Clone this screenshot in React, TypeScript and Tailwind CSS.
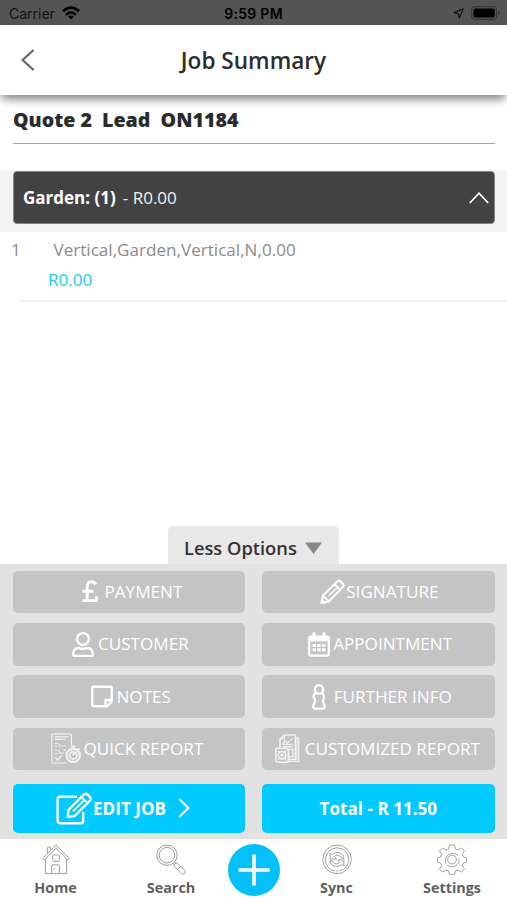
import type { ReactNode } from 'react';
import { FaRegStickyNote, FaRegUser } from 'react-icons/fa';
import clsx from 'clsx';

function PoundIcon({ className }: { className?: string }) {
  return (
    <svg viewBox="0 0 16 23" className={className} fill="none" stroke="currentColor" strokeWidth="2.9">
      <path d="M13.8 4.4Q12.4 1.8 9.6 1.8 5.2 1.8 5.2 6.6V20.4M.4 11.2H11.6M.4 20.6H14.4V16.2" />
    </svg>
  );
}

function PencilIcon({ className }: { className?: string }) {
  return (
    <svg viewBox="0 0 25 26" className={className} fill="none" stroke="currentColor" strokeWidth="2.1" strokeLinejoin="round">
      <path d="M1.5 24.2 3 16.6 17.3 2.4Q19 1 20.6 2.4L23 4.8Q24.2 6.3 22.8 8L8.8 22.4Z" />
      <path d="M14.6 5.4 20 10.8M3 16.6 8.8 22.4" strokeWidth="1.9" />
      <path d="M8.6 17 16.6 9" strokeWidth="1.3" />
      <path d="M1.5 24.2 2.4 20.2 5.4 23.2Z" fill="currentColor" strokeWidth="1" />
    </svg>
  );
}

function CalendarIcon({ className }: { className?: string }) {
  return (
    <svg viewBox="0 0 22 25" className={className} fill="none" stroke="currentColor">
      <path d="M6 1.6V5M16 1.6V5" strokeWidth="3" strokeLinecap="round" />
      <rect x="1.2" y="4.6" width="19.6" height="19" rx="1.6" strokeWidth="2.2" />
      <path d="M1.2 4.6h19.6v4.8H1.2z" fill="currentColor" stroke="none" />
      <path d="M4.6 13.4h12.8M4.6 17.8h12.8" strokeWidth="3" strokeDasharray="3.4 1.3" />
    </svg>
  );
}

function InfoIcon({ className }: { className?: string }) {
  return (
    <svg viewBox="0 0 14 26" className={className} fill="none" stroke="currentColor" strokeWidth="2.2" strokeLinejoin="round">
      <circle cx="7" cy="5.4" r="4.2" />
      <path d="M4 9.4Q1.4 10.4 1.4 12.4 1.4 13.8 2.8 14.6 3.6 16.8 2.6 18.8 1.2 20.4 1.2 22.6 1.2 24.6 3 24.6H11Q12.8 24.6 12.8 22.6 12.8 20.6 11.4 18.8 10.6 16.8 11.6 14.4 12.6 10.8 10 9.4" />
    </svg>
  );
}

function QuickReportIcon({ className }: { className?: string }) {
  return (
    <svg viewBox="0 0 30 31" className={className} fill="none" stroke="currentColor" strokeWidth="1.2" opacity="0.75">
      <path d="M16 30H2Q.8 30 .8 28.8V2Q.8.8 2 .8H19Q20.4.8 20.4 2V13" />
      <path d="M3.6 3.8H17.2M4 6.4H14.6M8.2 10.4V13H15M4 10.4h2.4M4 13h2.4M8.2 17v3h5M4 17.5h2.4M4 20.5h2.4M12 17h3" />
      <path d="M4.2 24.4 6.6 27 10.6 22.4" strokeWidth="1.5" />
      <circle cx="22.2" cy="22.4" r="6.6" strokeWidth="2.4" />
      <circle cx="22.2" cy="22.4" r="3.6" strokeWidth="1.8" />
      <path d="M20 13.4h4.4M22.2 13.4v2.4M27 15.4l1.6 1.6M22.2 22.4l1-2.6" strokeWidth="1.9" />
    </svg>
  );
}

function CustomizedReportIcon({ className }: { className?: string }) {
  return (
    <svg viewBox="0 0 25 29" className={className} fill="none" stroke="currentColor" strokeWidth="1.2" opacity="0.8">
      <path d="M5 13V5L9.4 1H19.4Q20.4 1 20.4 2V25.4H13.6" strokeWidth="1.5" />
      <path d="M21.8 3.4Q23.8 3.4 23.8 5V27.4H14" />
      <path d="M20.8 3.4h2.2v23h-2.2z" fill="currentColor" fillOpacity="0.5" stroke="none" />
      <path d="M9.4 1V5H5M7.4 10.4 10 6.6 12.4 9 17.4 4.4M7.4 10.4H17.4M7.6 12.6h10M13.4 15.4h4.4V22.6h-4.4" />
      <rect x=".8" y="14.2" width="12.6" height="14" rx="1.6" strokeWidth="1.6" />
      <circle cx="7" cy="21.2" r="3.7" strokeWidth="1.6" />
      <circle cx="7" cy="21.2" r="1.1" />
      <path d="M3 16.6 4.6 18.6M11.2 16.6 9.6 18.6M3 25.8 4.6 24M11.2 25.8 9.6 24" />
    </svg>
  );
}

function EditIcon({ className }: { className?: string }) {
  return (
    <svg viewBox="0 0 37 33" className={className} fill="none" stroke="currentColor" strokeWidth="2.4" strokeLinejoin="round">
      <path d="M21 4.8H4.2Q1.6 4.8 1.6 7.2V28.6Q1.6 31.2 4.2 31.2H24.8Q27.2 31.2 27.2 28.8V20" />
      <path d="M11.8 24.8 12.6 17.8 27.8 2.6Q29.8.8 31.6 2.6L34.2 5.2Q35.6 6.8 34 8.6L18.6 24Z" strokeWidth="2.3" />
      <path d="M25.4 5 31.6 11.2M17 19.4 27.6 8.8" strokeWidth="1.8" />
    </svg>
  );
}

function HomeIcon() {
  return (
    <svg viewBox="0 0 28 31" className="h-[31px] w-7" fill="none" stroke="currentColor" strokeWidth="1">
      <path d="M14 1 .7 14.2 2.2 16 14 4.4 25.8 16 27.3 14.2Z" />
      <path d="M3.4 15V29.6H24.6V15M5.4 10V3.2H8.4V7" />
      <rect x="10.8" y="11" width="6.6" height="6.4" rx="1" />
      <path d="M9.6 29.6V22Q9.6 20.8 10.8 20.8H16.2Q17.4 20.8 17.4 22V29.6M11.4 25h2" />
    </svg>
  );
}

function SearchIcon() {
  return (
    <svg viewBox="0 0 30 31" className="h-[31px] w-[30px]" fill="none" stroke="currentColor" strokeWidth="1">
      <circle cx="11" cy="11.2" r="10.2" />
      <circle cx="11" cy="11.2" r="7.8" />
      <path d="M17 19.4 19 21.4M19 17.8 21 19.8" />
      <path d="M18.4 22.6Q17.4 21 18.6 19.8 20.2 18.6 21.8 19.8L28.6 26Q30 27.8 28.6 29.4 26.8 30.8 25.2 29.4ZM21.6 25.4 25 22.4" />
    </svg>
  );
}

function SyncIcon() {
  return (
    <svg viewBox="0 0 30 31" className="h-[31px] w-[30px]" fill="none" stroke="currentColor" strokeWidth="1">
      <circle cx="15" cy="15.4" r="14.3" />
      <path d="M12.6 27Q3.4 24.6 3.4 15.4A11.6 11.6 0 0 1 26.6 15.4Q26.6 24.6 17.4 27M15 26v2.4" />
      <path d="M8.2 15V9L10.4 10.6Q15.4 6.4 20.4 10.4 22 12 22 14.4H19.6Q19 11.6 16 11 13.6 11 12.4 12.6L14.6 15Z" />
      <path d="M21.8 16V22L19.6 20.4Q14.6 24.6 9.6 20.6 8 19 8 16.6H10.4Q11 19.4 14 20 16.4 20 17.6 18.4L15.4 16Z" />
    </svg>
  );
}

function SettingsIcon() {
  return (
    <svg viewBox="0 0 30 31" className="h-[31px] w-[30px]" fill="none" stroke="currentColor" strokeWidth="1" strokeLinejoin="round">
      <path d="M12.4 1h5.2l.7 4 2.7 1.2 3.4-2.4 3.1 3.1-2.3 3.4 1.1 2.7 3.3.8v4.4l-3.3.8-1.1 2.7 2.3 3.4-3.1 3.1-3.4-2.4-2.7 1.2-.7 3.3h-5.2l-.7-3.3L9 25.8l-3.4 2.4-3.1-3.1 2.3-3.4L3.7 19l-3.3-.8v-4.4l3.3-.8 1.1-2.7-2.3-3.4 3.1-3.1L9 6.2 11.7 5Z" />
      <path d="M8.9 19.5A7.3 7.3 0 0 1 21.1 11.8M22 14.4A7.3 7.3 0 0 1 10.4 21.4" />
      <circle cx="15" cy="15.5" r="4.4" />
    </svg>
  );
}

type Option = { label: string; icon: ReactNode; pad: string; text: string };

const options: Option[] = [
  { label: 'PAYMENT', icon: <PoundIcon className="h-[23px] w-4" />, pad: 'pl-[69px]', text: 'ml-[6.5px]' },
  { label: 'SIGNATURE', icon: <PencilIcon className="h-[26px] w-[25px]" />, pad: 'pl-[57.5px]', text: 'ml-[1.5px]' },
  { label: 'CUSTOMER', icon: <FaRegUser className="h-[25px] w-[22px]" />, pad: 'pl-[59px]', text: 'ml-[4px]' },
  { label: 'APPOINTMENT', icon: <CalendarIcon className="h-[25px] w-[22px]" />, pad: 'pl-[45.5px]', text: 'ml-[3.5px]' },
  { label: 'NOTES', icon: <FaRegStickyNote className="h-[25px] w-[22px]" />, pad: 'pl-[77.5px]', text: 'ml-[4px]' },
  { label: 'FURTHER INFO', icon: <InfoIcon className="h-[26px] w-[14px]" />, pad: 'pl-[50px]', text: 'ml-[7.5px]' },
  { label: 'QUICK REPORT', icon: <QuickReportIcon className="h-[31px] w-[30px]" />, pad: 'pl-[38px]', text: 'ml-[2.5px]' },
  { label: 'CUSTOMIZED REPORT', icon: <CustomizedReportIcon className="h-[29px] w-[25px]" />, pad: 'pl-[13px]', text: 'ml-[4.5px]' },
];

function NavItem({ label, className, children }: { label: string; className: string; children: ReactNode }) {
  return (
    <button className={clsx('flex flex-col items-center pt-[4px] text-[#a0a0a0]', className)}>
      {children}
      <span className="mt-[3px] text-[14.4px] leading-5 font-bold text-[#5f5f5f]">{label}</span>
    </button>
  );
}

export default function App() {
  return (
    <div className="flex h-[900px] w-[507px] flex-col overflow-hidden bg-white font-['Open_Sans',sans-serif]">
      <div className="grid h-[25px] shrink-0 grid-cols-3 items-center bg-[#545454] pt-px font-['Inter',sans-serif] text-[14px] text-[#111]">
        <div className="flex items-center gap-[7px] pl-[9px]">
          <span>Carrier</span>
          <svg viewBox="0 0 18 14" className="-mt-px h-[14px] w-[18px]" fill="none" stroke="#000" strokeWidth="2.6">
            <path d="M1 5.2Q9-2 17 5.2M4 8.7Q9 4.2 14 8.7" />
            <path d="M9 13.4 6.2 10.6Q9 8.4 11.8 10.6Z" fill="#000" stroke="none" />
          </svg>
        </div>
        <span className="text-center text-[14px] font-semibold tracking-[0.3px] text-black">9:59 PM</span>
        <div className="flex items-center justify-end gap-[7px] pr-[7px]">
          <svg viewBox="0 0 11 11" className="h-[11px] w-[11px]" fill="none" stroke="#111" strokeWidth="1.2" strokeLinejoin="round">
            <path d="M10.2.8 6.4 10 5.4 5.6.8 4.6Z" />
          </svg>
          <svg viewBox="0 0 29 14" className="h-[14px] w-[29px]">
            <rect x=".6" y=".6" width="25" height="12.8" rx="3.5" fill="none" stroke="#393939" strokeWidth="1.2" />
            <rect x="2.4" y="2.6" width="21.4" height="8.8" rx="2" fill="#000" />
            <path d="M27 4.8q1.6 1 1.6 2.2T27 9.2Z" fill="#393939" />
          </svg>
        </div>
      </div>

      <header className="z-10 grid h-[70px] shrink-0 grid-cols-[60px_1fr_60px] items-center bg-white shadow-[0_6px_9px_-2px_rgba(0,0,0,0.5)]">
        <button className="pl-[21px]">
          <svg viewBox="0 0 14 22" className="h-[22px] w-[14px]" fill="none" stroke="#666" strokeWidth="2.2">
            <path d="M12.6 1 1.6 11 12.6 21" />
          </svg>
        </button>
        <h1 className="pt-[2px] text-center text-[22.6px] font-semibold text-[#2d2d2d]">Job Summary</h1>
      </header>

      <div className="mr-3 ml-[13px] h-[49px] shrink-0 border-b border-[#a5a5a5] pt-[10px]">
        <h2 className="text-[19.6px] leading-[30px] font-extrabold whitespace-pre text-[#2b2b2b]">Quote 2  Lead  ON1184</h2>
      </div>

      <section className="mt-[26px] shrink-0">
        <div className="h-[62px] bg-[#f3f3f3] pt-px pr-3 pl-[13px]">
          <button className="flex h-[53px] w-full items-center rounded-[4px] border border-[#858585] bg-[#424242] pt-px pr-[5px] pl-[9px] text-[17px] text-[#f2f2f2]">
            <span className="font-bold text-white">Garden: (1)</span>
            <span className="ml-[7px]">- R0.00</span>
            <svg viewBox="0 0 20 12" className="ml-auto h-3 w-5" fill="none" stroke="#fff" strokeWidth="1.7">
              <path d="M.8 11 10 1.2 19.2 11" />
            </svg>
          </button>
        </div>
        <div className="flex h-[68px] pt-[5px] text-[17.1px] text-[#8b8b8b]">
          <span className="w-[48px] pl-[11px] leading-[26px]">1</span>
          <div>
            <p className="pl-[5.5px] leading-[26px]">Vertical,Garden,Vertical,N,0.00</p>
            <p className="mt-[4px] leading-[26px] text-[#1fc8f5]">R0.00</p>
          </div>
        </div>
        <div className="ml-5 h-[2px] bg-[#f1f1f1]" />
      </section>

      <div className="mt-auto shrink-0">
        <button className="ml-[168px] flex h-[38px] w-[171px] items-center rounded-t-[5px] bg-[#e8e8e8] pt-[6px] pl-4 text-[18.3px] font-semibold text-[#333]">
          Less Options
          <svg viewBox="0 0 17 12" className="ml-[8px] h-3 w-[17px]" fill="#868686">
            <path d="M0 .5h17L8.5 12Z" />
          </svg>
        </button>
        <div className="h-[275px] bg-[#e2e2e2] pt-[6.5px] pr-[12.5px] pl-[13px]">
          <div className="grid grid-cols-2 gap-x-[17px] gap-y-[9.7px]">
            {options.map((option) => (
              <button
                key={option.label}
                className={clsx('flex h-[42.7px] items-center rounded-[5px] bg-[#c4c4c4] text-[17.1px] whitespace-nowrap text-white', option.pad)}
              >
                {option.icon}
                <span className={option.text}>{option.label}</span>
              </button>
            ))}
          </div>
          <div className="mt-[13.4px] grid h-[49px] grid-cols-2 gap-x-[17px] text-[17.1px] font-bold text-white">
            <button className="flex items-center rounded-[5px] bg-[#00caff] pl-[43px]">
              <EditIcon className="h-[33px] w-[37px]" />
              <span className="pt-px">EDIT JOB</span>
              <svg viewBox="0 0 12 20" className="ml-[12px] h-5 w-3" fill="none" stroke="currentColor" strokeWidth="2">
                <path d="M1.2 1 10.4 10 1.2 19" />
              </svg>
            </button>
            <button className="rounded-[5px] bg-[#00caff] pt-px">Total - R 11.50</button>
          </div>
        </div>
      </div>

      <nav className="flex h-[61px] shrink-0 items-start bg-white pt-px">
        <NavItem label="Home" className="w-[111px] shrink-0"><HomeIcon /></NavItem>
        <NavItem label="Search" className="ml-px w-[118px] shrink-0"><SearchIcon /></NavItem>
        <button className="-ml-[2px] mt-[4px] flex h-[52px] w-[52px] shrink-0 items-center justify-center rounded-full bg-[#05bffa] text-white">
          <svg viewBox="0 0 32 32" className="h-8 w-8" fill="none" stroke="currentColor" strokeWidth="3.6">
            <path d="M16 .5v31M.5 16h31" />
          </svg>
        </button>
        <NavItem label="Sync" className="w-[113px] shrink-0"><SyncIcon /></NavItem>
        <NavItem label="Settings" className="w-[118px] shrink-0"><SettingsIcon /></NavItem>
      </nav>
    </div>
  );
}
